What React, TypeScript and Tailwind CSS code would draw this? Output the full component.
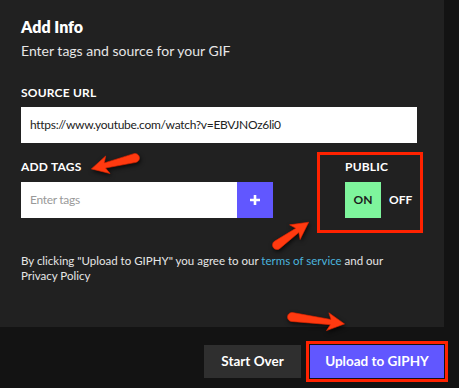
import React from "react";

function Arrow({ x, y, angle, len }: { x: number; y: number; angle: number; len: number }) {
  const L = len;
  const d = `M0,-4.5 L${L - 14},-2.6 L${L - 17},-9 L${L},0 L${L - 17},9 L${L - 14},2.6 L0,4.5 A4.5,4.5 0 0 1 0,-4.5 Z`;
  return (
    <g transform={`translate(${x},${y}) rotate(${angle})`}>
      <path d={d} fill="#ff3a10" stroke="#e02500" strokeWidth={0.6} strokeLinejoin="round" />
    </g>
  );
}

export default function App() {
  const font = { fontFamily: "Lato, 'Noto Sans', sans-serif" };
  return (
    <div className="relative w-[459px] h-[388px] bg-[#131313] overflow-hidden text-white" style={font}>
      <div className="w-[444px] h-[327px] bg-[#212121] px-[21px] pt-[15px]">
        <div className="text-[16px] leading-[24px] font-extrabold">Add Info</div>
        <div className="text-[14px] leading-[20px] mt-[2px] text-[#e6e6e6]">Enter tags and source for your GIF</div>
        <div className="mt-[24px] text-[12px] leading-[16px] font-bold tracking-[0.2px]">SOURCE URL</div>
        <div className="mt-[6px] w-[396px] h-[36px] bg-white flex items-center pl-[9px] text-[12px] tracking-[-0.3px] text-[#222]">
          https://www.youtube.com/watch?v=EBVJNOz6li0
        </div>
        <div className="mt-[9px] flex items-start">
          <div className="w-[252px] pt-[7px]">
            <div className="text-[12px] leading-[16px] font-bold tracking-[0.2px]">ADD TAGS</div>
            <div className="mt-[7px] flex h-[36px]">
              <div className="w-[216px] bg-white flex items-center pl-[9px] text-[12px] tracking-[-0.3px] text-[#999]">Enter tags</div>
              <div className="w-[36px] bg-[#6157ff] flex items-center justify-center text-white">
                <svg width="12" height="12" viewBox="0 0 12 12">
                  <path d="M6 1v10M1 6h10" stroke="white" strokeWidth="2.6" />
                </svg>
              </div>
            </div>
          </div>
          <div className="ml-[44px] w-[112px] h-[81px] border-[3px] border-[#ff2200] pl-[25px] pt-[4px]">
            <div className="text-[12px] leading-[16px] font-bold tracking-[0.2px]">PUBLIC</div>
            <div className="mt-[7px] flex items-center">
              <div className="w-[36px] h-[36px] bg-[#7ef59c] flex items-center justify-center text-[12px] font-bold text-[#1c1c1c]">ON</div>
              <div className="ml-[8px] text-[12px] font-bold">OFF</div>
            </div>
          </div>
        </div>
        <div className="mt-[20px] text-[11.5px] leading-[15px] text-[#e6e6e6]">
          By clicking "Upload to GIPHY" you agree to our <span className="text-[#4bb4dd]">terms of service</span> and our
          <br />
          Privacy Policy
        </div>
      </div>
      <div className="flex justify-end gap-[9px] mt-[18px] pr-[15px]">
        <div className="w-[97px] h-[33px] bg-[#2f2f2f] flex items-center justify-center text-[13.5px] font-bold">Start Over</div>
        <div className="w-[134px] h-[33px] bg-[#6157ff] flex items-center justify-center text-[13.5px] font-bold outline-[3px] outline-solid outline-[#ff2200] outline-offset-[1px]">
          Upload to GIPHY
        </div>
      </div>
      <svg className="absolute left-0 top-0 pointer-events-none" width="459" height="388" style={{ filter: "drop-shadow(1px 2px 2px rgba(0,0,0,0.7))" }}>
        <Arrow x={135} y={158} angle={166} len={45} />
        <Arrow x={277} y={245} angle={-35.7} len={39} />
        <Arrow x={292} y={317} angle={7.5} len={53} />
      </svg>
    </div>
  );
}
